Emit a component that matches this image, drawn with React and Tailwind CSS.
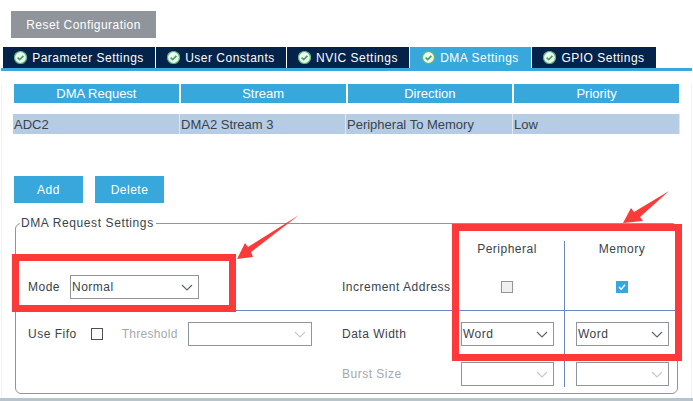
import React from 'react';

const tabs = [
  { label: 'Parameter Settings', width: 'w-[152px]' },
  { label: 'User Constants', width: 'w-[130px]' },
  { label: 'NVIC Settings', width: 'w-[122px]' },
  { label: 'DMA Settings', width: 'w-[121px]', active: true },
  { label: 'GPIO Settings', width: 'w-[124px]' },
];

const columns = ['DMA Request', 'Stream', 'Direction', 'Priority'];
const row = ['ADC2', 'DMA2 Stream 3', 'Peripheral To Memory', 'Low'];

function CheckBadge() {
  return (
    <svg width="13" height="13" viewBox="0 0 13 13" className="shrink-0">
      <circle cx="6.5" cy="6.5" r="6" fill="#eef7f1" stroke="#5cb87a" strokeWidth="1.2" />
      <path d="M3.6 6.6 L5.7 8.6 L9.4 4.8" fill="none" stroke="#3fa866" strokeWidth="1.8" />
    </svg>
  );
}

function Select({ value, disabled, width = 'w-[93px]' }) {
  return (
    <div className={`flex h-6 items-center justify-between border border-[#8f959b] pl-[1px] pr-[5px] ${width}`}>
      <span className="text-[#39434d]">{value}</span>
      <svg width="12" height="7" viewBox="0 0 12 7">
        <path d="M1 1 L6 6 L11 1" fill="none" stroke={disabled ? '#c3c8cc' : '#5a646d'} strokeWidth="1.1" />
      </svg>
    </div>
  );
}

function Arrow({ className, points }) {
  return (
    <svg className={className} width="80" height="60" viewBox="0 0 80 60">
      <polygon points={points} fill="#fd3a3a" />
    </svg>
  );
}

export default function App() {
  return (
    <div className="relative h-[401px] w-[693px] overflow-hidden bg-white font-['Liberation_Sans',sans-serif] text-xs tracking-[0.5px] text-[#39434d]">
      <div className="px-[11px] pt-[11px]">
        <button className="h-[27px] w-[145px] bg-[#8f959b] tracking-[0.45px] text-white">Reset Configuration</button>
      </div>

      <div className="mt-[9px] flex pl-[3px]">
        {tabs.map((tab) => (
          <div
            key={tab.label}
            className={`mr-px flex h-[21px] items-center justify-center gap-[5px] text-white ${tab.width} ${tab.active ? 'bg-[#38a8dc]' : 'bg-[#03234b]'}`}
          >
            <CheckBadge />
            {tab.label}
          </div>
        ))}
      </div>

      <div className="ml-px mr-px h-[330px] border-t-[3px] border-[#38a8dc]">
        <div className="h-full border-x border-b-[2px] border-[#f1f3f5]">
          <div className="mx-[12px] mt-[13px] flex gap-[2px] tracking-normal">
            {columns.map((column) => (
              <div key={column} className="flex h-[19px] flex-1 items-center justify-center bg-[#38a8dc] text-[13px] text-white">
                {column}
              </div>
            ))}
          </div>

          <div className="mx-[11px] mt-[11px] grid h-5 grid-cols-[166px_165px_166px_166px] gap-px bg-[#dfe6ee] tracking-normal">
            {row.map((cell) => (
              <div key={cell} className="flex items-center bg-[#b6cce4] pl-px text-[13px] leading-none">
                {cell}
              </div>
            ))}
          </div>

          <div className="ml-[12px] mt-[42px] flex gap-3">
            <button className="h-[27px] w-[69px] bg-[#38a8dc] text-white">Add</button>
            <button className="h-[27px] w-[69px] bg-[#38a8dc] text-white">Delete</button>
          </div>

          <fieldset className="ml-[13px] mr-[13px] mt-[13px] h-[178px] rounded-md border border-[#8f959b]">
            <legend className="ml-[4px] pr-[2px] pl-px leading-[14px] tracking-[0.6px]">DMA Request Settings</legend>
            <div className="mt-[11px] grid grid-cols-[326px_119px_103px_1px_112px] grid-rows-[22px_48px_46px_34px]">
              <div className="col-start-3 pr-[11px] text-center">Peripheral</div>
              <div className="col-start-5 pl-[2px] text-center">Memory</div>

              <div className="col-start-4 row-span-4 row-start-1 mb-[4px] w-px bg-[#6c86c4]" />
              <div className="col-span-5 col-start-1 row-start-2 ml-[4px] mr-px h-px self-end bg-[#6c86c4]" />

              <div className="col-start-1 row-start-2 flex items-center pl-3">
                <span className="mr-[10px]">Mode</span>
                <Select value="Normal" width="w-[129px]" />
              </div>
              <div className="col-start-2 row-start-2 flex items-center whitespace-nowrap">Increment Address</div>
              <div className="col-start-3 row-start-2 flex items-center justify-center pr-[12px]">
                <div className="h-3 w-3 border border-[#8f959b] bg-[#eef0f2]" />
              </div>
              <div className="col-start-5 row-start-2 flex items-center justify-center pl-[2px]">
                <div className="flex h-3 w-3 items-center justify-center bg-[#38a8dc]">
                  <svg width="10" height="10" viewBox="0 0 10 10">
                    <path d="M2 5 L4.2 7.2 L8 2.8" fill="none" stroke="white" strokeWidth="1.4" />
                  </svg>
                </div>
              </div>

              <div className="col-start-1 row-start-3 flex items-center pl-3">
                <span>Use Fifo</span>
                <div className="ml-[14px] h-3 w-3 border border-[#4b5157]" />
                <span className="ml-[19px] mr-[10px] tracking-[0.3px] text-[#a3a9ae]">Threshold</span>
                <Select disabled width="w-[124px]" />
              </div>
              <div className="col-start-2 row-start-3 flex items-center">Data Width</div>
              <div className="col-start-3 row-start-3 flex items-center">
                <Select value="Word" />
              </div>
              <div className="col-start-5 row-start-3 flex items-center pl-[11px]">
                <Select value="Word" />
              </div>

              <div className="col-start-2 row-start-4 flex items-center text-[#a3a9ae]">Burst Size</div>
              <div className="col-start-3 row-start-4 flex items-center">
                <Select disabled />
              </div>
              <div className="col-start-5 row-start-4 flex items-center pl-[11px]">
                <Select disabled />
              </div>
            </div>
          </fieldset>
        </div>
      </div>

      <div className="h-[3px] bg-[#b8c4cc]" />

      {/* red annotations over the screenshot */}
      <div className="absolute left-[12px] top-[254px] h-[58px] w-[224px] border-[7px] border-[#fd3a3a]" />
      <div className="absolute left-[452px] top-[224px] h-[137px] w-[230px] border-[7px] border-[#fd3a3a]" />
      <Arrow className="absolute left-[230px] top-[212px]" points="69,3 21,40 23,45 7,47 15,31 18,35" />
      <Arrow className="absolute left-[620px] top-[188px]" points="49,3 20,29 23,33 3,35 11,20 14,24" />
    </div>
  );
}
